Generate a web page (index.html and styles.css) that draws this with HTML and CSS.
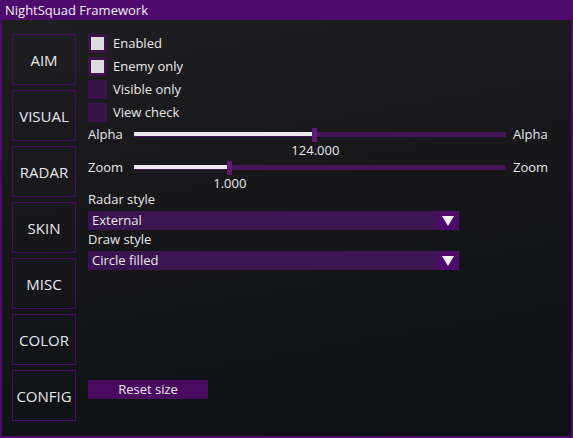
FILE: index.html
```html
<!DOCTYPE html>
<html>
<head>
<meta charset="utf-8">
<link rel="stylesheet" href="styles.css">
</head>
<body>
<div class="window">
  <div class="titlebar">NightSquad Framework</div>
  <div class="content">
    <div class="tabs">
      <div class="tab">AIM</div>
      <div class="tab">VISUAL</div>
      <div class="tab">RADAR</div>
      <div class="tab">SKIN</div>
      <div class="tab">MISC</div>
      <div class="tab">COLOR</div>
      <div class="tab">CONFIG</div>
    </div>
    <div class="main">
      <div class="check-row"><span class="box checked"></span><span class="label">Enabled</span></div>
      <div class="check-row"><span class="box checked"></span><span class="label">Enemy only</span></div>
      <div class="check-row"><span class="box"></span><span class="label">Visible only</span></div>
      <div class="check-row"><span class="box"></span><span class="label">View check</span></div>

      <div class="slider">
        <div class="slider-label">Alpha</div>
        <div class="slider-body">
          <div class="track-wrap">
            <div class="track"><div class="fill" style="width:48.6%"></div></div>
            <div class="grab" style="left:calc(48.6% * 367 / 372)"></div>
          </div>
          <div class="value-line"><span class="value" style="left:calc(48.6% * 367 / 372 + 3px)">124.000</span></div>
        </div>
        <div class="slider-right">Alpha</div>
      </div>

      <div class="slider">
        <div class="slider-label">Zoom</div>
        <div class="slider-body">
          <div class="track-wrap">
            <div class="track"><div class="fill" style="width:25.3%"></div></div>
            <div class="grab" style="left:calc(25.3% * 367 / 372)"></div>
          </div>
          <div class="value-line"><span class="value" style="left:calc(25.3% * 367 / 372 + 3px)">1.000</span></div>
        </div>
        <div class="slider-right">Zoom</div>
      </div>

      <div class="field-label">Radar style</div>
      <div class="combo"><span class="combo-text">External</span><span class="combo-arrow"><span class="tri"></span></span></div>
      <div class="field-label">Draw style</div>
      <div class="combo"><span class="combo-text">Circle filled</span><span class="combo-arrow"><span class="tri"></span></span></div>

      <div class="button">Reset size</div>
    </div>
  </div>
</div>
</body>
</html>
```

FILE: styles.css
```css
* { box-sizing: border-box; }
html, body {
  margin: 0;
  padding: 0;
  width: 573px;
  height: 438px;
  overflow: hidden;
  background: #0e1115;
  font-family: "Open Sans", "Noto Sans", sans-serif;
  color: #e8e8ea;
  font-size: 13px;
}
.window {
  width: 573px;
  height: 438px;
  display: flex;
  flex-direction: column;
  border: 2px solid #4f0b6b;
  border-top: none;
  background: linear-gradient(170deg, #1f1e21 0%, #17171a 45%, #0d1015 100%);
}
.titlebar {
  height: 20px;
  background: #4f0b6b;
  margin: 0 -2px;
  padding-left: 5px;
  line-height: 20px;
  font-size: 13px;
  color: #f0eef2;
}
.content {
  display: flex;
  flex: 1;
  padding-top: 14px;
}
.tabs {
  display: flex;
  flex-direction: column;
  gap: 5px;
  margin-left: 10px;
  width: 64px;
}
.tab {
  height: 51px;
  border: 1px solid #4a0d5e;
  display: flex;
  align-items: center;
  justify-content: center;
  font-size: 15px;
  color: #e8e8ea;
}
.main {
  margin-left: 12px;
  display: flex;
  flex-direction: column;
  width: 470px;
}
.check-row {
  height: 19px;
  margin-bottom: 4px;
  display: flex;
  align-items: center;
}
.box {
  width: 19px;
  height: 19px;
  background: #3a1349;
  border: 3px solid #3a1349;
  margin-right: 6px;
}
.box.checked {
  background: #dedbe0;
}
.label { line-height: 19px; }
.slider {
  display: flex;
  align-items: flex-start;
}
.slider + .slider { margin-top: 2px; }
.slider-label {
  width: 46px;
  height: 17px;
  line-height: 17px;
}
.slider-body {
  width: 372px;
  display: flex;
  flex-direction: column;
}
.track-wrap {
  position: relative;
  height: 17px;
  display: flex;
  align-items: center;
}
.track {
  width: 100%;
  height: 5px;
  background: #45155a;
}
.fill {
  height: 4px;
  background: #ebe7ec;
}
.grab {
  position: absolute;
  top: 2px;
  width: 5px;
  height: 14px;
  background: #5c1a75;
}
.value-line {
  position: relative;
  height: 14px;
}
.value {
  position: absolute;
  top: 0;
  transform: translateX(-50%);
  line-height: 14px;
}
.slider-right {
  margin-left: 7px;
  height: 17px;
  line-height: 17px;
}
.field-label {
  height: 21px;
  line-height: 19px;
}
.combo {
  width: 371px;
  height: 19px;
  display: flex;
  background: linear-gradient(90deg, #3a1450, #3f1654);
}
.combo-text {
  flex: 1;
  padding-left: 4px;
  line-height: 19px;
}
.combo-arrow {
  width: 22px;
  background: #4f0b69;
  display: flex;
  align-items: center;
  justify-content: center;
}
.tri {
  width: 0;
  height: 0;
  border-left: 6px solid transparent;
  border-right: 6px solid transparent;
  border-top: 10px solid #f2f0f4;
}
.button {
  margin-top: 110px;
  width: 120px;
  height: 19px;
  background: #4a0a60;
  text-align: center;
  line-height: 19px;
}
```
